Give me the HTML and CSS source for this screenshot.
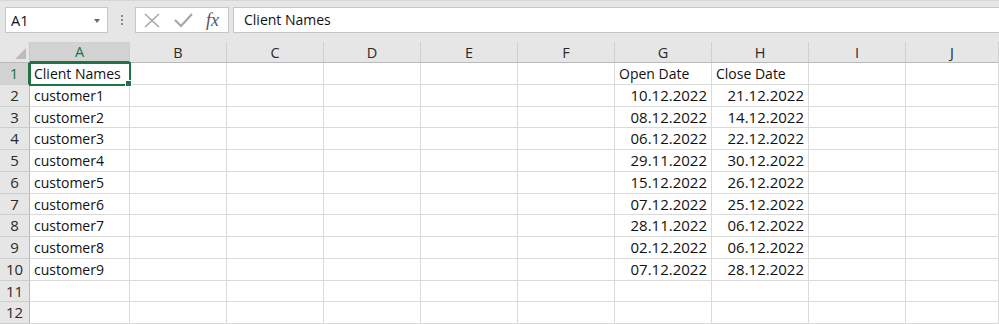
FILE: index.html
```html
<!DOCTYPE html>
<html lang="en">
  <head>
    <title>Book1 - Excel</title>
    <link rel="stylesheet" href="styles.css">
  </head>
  <body>
    <!-- 이름 상자 + 수식 입력줄 -->
    <div class="toolbar">
      <div class="namebox">
        <span>A1</span>
        <span class="caret"></span>
      </div>
      <div class="grip">
        <i></i><i></i><i></i>
      </div>
      <div class="fx-buttons">
        <svg width="16" height="15" viewBox="0 0 16 15">
          <path d="M1 1 L15 14 M15 1 L1 14" stroke="#a8a8a8" stroke-width="1.6" fill="none" />
        </svg>
        <svg width="19" height="14" viewBox="0 0 19 14">
          <path d="M1 7 L7 13 L18 1" stroke="#a8a8a8" stroke-width="2.2" fill="none" />
        </svg>
        <span class="fx">fx</span>
      </div>
      <div class="formula">Client Names</div>
    </div>

    <!-- 시트 -->
    <div class="sheet">
      <div class="corner"><span class="tri"></span></div>
      <div class="col-head active">A</div>
      <div class="col-head">B</div>
      <div class="col-head">C</div>
      <div class="col-head">D</div>
      <div class="col-head">E</div>
      <div class="col-head">F</div>
      <div class="col-head">G</div>
      <div class="col-head">H</div>
      <div class="col-head">I</div>
      <div class="col-head">J</div>

      <div class="row-head active">1</div>
      <div class="cell selected">Client Names</div>
      <div class="cell"></div><div class="cell"></div><div class="cell"></div><div class="cell"></div><div class="cell"></div>
      <div class="cell">Open Date</div>
      <div class="cell">Close Date</div>
      <div class="cell"></div><div class="cell"></div>

      <div class="row-head">2</div>
      <div class="cell">customer1</div>
      <div class="cell"></div><div class="cell"></div><div class="cell"></div><div class="cell"></div><div class="cell"></div>
      <div class="cell num">10.12.2022</div>
      <div class="cell num">21.12.2022</div>
      <div class="cell"></div><div class="cell"></div>

      <div class="row-head">3</div>
      <div class="cell">customer2</div>
      <div class="cell"></div><div class="cell"></div><div class="cell"></div><div class="cell"></div><div class="cell"></div>
      <div class="cell num">08.12.2022</div>
      <div class="cell num">14.12.2022</div>
      <div class="cell"></div><div class="cell"></div>

      <div class="row-head">4</div>
      <div class="cell">customer3</div>
      <div class="cell"></div><div class="cell"></div><div class="cell"></div><div class="cell"></div><div class="cell"></div>
      <div class="cell num">06.12.2022</div>
      <div class="cell num">22.12.2022</div>
      <div class="cell"></div><div class="cell"></div>

      <div class="row-head">5</div>
      <div class="cell">customer4</div>
      <div class="cell"></div><div class="cell"></div><div class="cell"></div><div class="cell"></div><div class="cell"></div>
      <div class="cell num">29.11.2022</div>
      <div class="cell num">30.12.2022</div>
      <div class="cell"></div><div class="cell"></div>

      <div class="row-head">6</div>
      <div class="cell">customer5</div>
      <div class="cell"></div><div class="cell"></div><div class="cell"></div><div class="cell"></div><div class="cell"></div>
      <div class="cell num">15.12.2022</div>
      <div class="cell num">26.12.2022</div>
      <div class="cell"></div><div class="cell"></div>

      <div class="row-head">7</div>
      <div class="cell">customer6</div>
      <div class="cell"></div><div class="cell"></div><div class="cell"></div><div class="cell"></div><div class="cell"></div>
      <div class="cell num">07.12.2022</div>
      <div class="cell num">25.12.2022</div>
      <div class="cell"></div><div class="cell"></div>

      <div class="row-head">8</div>
      <div class="cell">customer7</div>
      <div class="cell"></div><div class="cell"></div><div class="cell"></div><div class="cell"></div><div class="cell"></div>
      <div class="cell num">28.11.2022</div>
      <div class="cell num">06.12.2022</div>
      <div class="cell"></div><div class="cell"></div>

      <div class="row-head">9</div>
      <div class="cell">customer8</div>
      <div class="cell"></div><div class="cell"></div><div class="cell"></div><div class="cell"></div><div class="cell"></div>
      <div class="cell num">02.12.2022</div>
      <div class="cell num">06.12.2022</div>
      <div class="cell"></div><div class="cell"></div>

      <div class="row-head">10</div>
      <div class="cell">customer9</div>
      <div class="cell"></div><div class="cell"></div><div class="cell"></div><div class="cell"></div><div class="cell"></div>
      <div class="cell num">07.12.2022</div>
      <div class="cell num">28.12.2022</div>
      <div class="cell"></div><div class="cell"></div>

      <div class="row-head">11</div>
      <div class="cell"></div><div class="cell"></div><div class="cell"></div><div class="cell"></div><div class="cell"></div>
      <div class="cell"></div><div class="cell"></div><div class="cell"></div><div class="cell"></div><div class="cell"></div>

      <div class="row-head">12</div>
      <div class="cell"></div><div class="cell"></div><div class="cell"></div><div class="cell"></div><div class="cell"></div>
      <div class="cell"></div><div class="cell"></div><div class="cell"></div><div class="cell"></div><div class="cell"></div>
    </div>
  </body>
</html>
```

FILE: styles.css
```css
/* 기본 */
body {
  margin: 0;
  font-family: "Open Sans", "Noto Sans", sans-serif;
  color: #111;
  background-color: #fff;
  overflow: hidden;
}

/* 상단 수식 입력줄 */
.toolbar {
  display: flex;
  align-items: center;
  height: 42px;
  padding-left: 5px;
  padding-bottom: 3px;
  background-color: #e6e6e6;
  box-sizing: border-box;
  border-top: 1px solid #d6d6d6;
}

.namebox {
  display: flex;
  align-items: center;
  justify-content: space-between;
  width: 103px;
  height: 26px;
  padding: 0 7px 0 5px;
  background-color: #fff;
  border: 1px solid #c6c6c6;
  box-sizing: border-box;
  font-size: 14.5px;
}

.caret {
  width: 0;
  height: 0;
  border-left: 3px solid transparent;
  border-right: 3px solid transparent;
  border-top: 4px solid #6a6a6a;
  margin-top: 2px;
}

.grip {
  display: flex;
  flex-direction: column;
  gap: 2px;
  width: 27px;
  align-items: center;
}

.grip i {
  width: 2px;
  height: 2px;
  background-color: #8a8a8a;
}

.fx-buttons {
  display: flex;
  align-items: center;
  width: 94px;
  height: 26px;
  padding-left: 8px;
  gap: 14px;
  background-color: #fff;
  border: 1px solid #c6c6c6;
  box-sizing: border-box;
}

.fx {
  font-family: "Liberation Serif", serif;
  font-style: italic;
  font-size: 18px;
  color: #555;
  margin-left: -1px;
}

.formula {
  flex: 1;
  height: 26px;
  margin-left: 4px;
  padding-left: 10px;
  line-height: 24px;
  background-color: #fff;
  border: 1px solid #c6c6c6;
  border-right: none;
  box-sizing: border-box;
  font-size: 14px;
}

/* 시트 그리드 */
.sheet {
  display: grid;
  grid-template-columns: 30px 100px repeat(8, 97px) 1fr;
  grid-template-rows: 21px;
  grid-auto-rows: 21.75px;
}

.sheet > div {
  box-sizing: border-box;
  border-right: 1px solid #dadada;
  border-bottom: 1px solid #dadada;
  white-space: nowrap;
  overflow: visible;
}

.corner {
  position: relative;
  background-color: #e6e6e6;
  border-bottom-color: #b9b9b9 !important;
  border-right-color: #c9c9c9 !important;
}

.tri {
  position: absolute;
  right: 3px;
  bottom: 3px;
  width: 0;
  height: 0;
  border-left: 11px solid transparent;
  border-bottom: 11px solid #bcbcbc;
}

.col-head {
  background-color: #e6e6e6;
  text-align: center;
  font-size: 14.5px;
  line-height: 21px;
  color: #2a2a2a;
  border-bottom-color: #b9b9b9 !important;
  border-right-color: #cfcfcf !important;
}

.col-head.active {
  background-color: #d2d2d2;
  color: #217346;
  border-bottom: 2px solid #217346 !important;
  line-height: 20px;
}

.row-head {
  background-color: #e6e6e6;
  text-align: center;
  font-size: 15px;
  line-height: 21px;
  color: #2a2a2a;
  border-right-color: #b9b9b9 !important;
  border-bottom-color: #cdcdcd !important;
}

.row-head.active {
  background-color: #d2d2d2;
  color: #217346;
  border-right: 2px solid #217346 !important;
}

.cell {
  padding: 0 4px;
  font-size: 14px;
  line-height: 21px;
}

.cell.num {
  text-align: right;
  font-size: 15px;
}

.cell.selected {
  position: relative;
  outline: 2px solid #217346;
  outline-offset: -1px;
  z-index: 1;
}

.cell.selected::after {
  content: "";
  position: absolute;
  right: -3px;
  bottom: -3px;
  width: 5px;
  height: 5px;
  background-color: #217346;
  border: 1px solid #fff;
}
```
